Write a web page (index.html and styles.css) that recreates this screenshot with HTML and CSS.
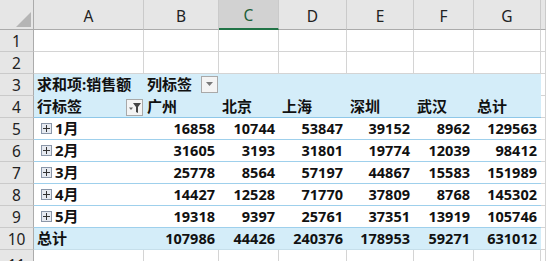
FILE: index.html
```html
<!DOCTYPE html>
<html lang="zh-CN">
<head>
    <meta charset="UTF-8">
    <title>数据透视表</title>
    <link rel="stylesheet" href="styles.css">
</head>
<body>
<div class="sheet">
    <!-- header row -->
    <div class="corner"><span class="tri"></span></div>
    <div class="col-head">A</div>
    <div class="col-head">B</div>
    <div class="col-head active">C</div>
    <div class="col-head">D</div>
    <div class="col-head">E</div>
    <div class="col-head">F</div>
    <div class="col-head">G</div>
    <div class="col-head"></div>

    <!-- row 1 -->
    <div class="row-head">1</div>
    <div class="cell"></div><div class="cell"></div><div class="cell"></div><div class="cell"></div>
    <div class="cell"></div><div class="cell"></div><div class="cell"></div><div class="cell"></div>

    <!-- row 2 -->
    <div class="row-head">2</div>
    <div class="cell"></div><div class="cell"></div><div class="cell"></div><div class="cell"></div>
    <div class="cell"></div><div class="cell"></div><div class="cell"></div><div class="cell"></div>

    <!-- row 3 -->
    <div class="row-head">3</div>
    <div class="pv head">求和项:销售额</div>
    <div class="pv head span2">列标签<span class="drop-btn"><svg width="8" height="5" viewBox="0 0 8 5"><path d="M0 0h7L3.5 4z" fill="#7a7a7a"/></svg></span></div>
    <div class="pv head"></div>
    <div class="pv head"></div>
    <div class="pv head"></div>
    <div class="pv head"></div>
    <div class="cell"></div>

    <!-- row 4 -->
    <div class="row-head">4</div>
    <div class="pv head under split">行标签 <span class="filter-btn"><svg width="14" height="12" viewBox="0 0 14 12"><path d="M1 5.5h4L3 8z" fill="#666"/><path d="M5 1h8L10 5v6L8 10V5z" fill="#444"/></svg></span></div>
    <div class="pv head under">广州</div>
    <div class="pv head under">北京</div>
    <div class="pv head under">上海</div>
    <div class="pv head under">深圳</div>
    <div class="pv head under">武汉</div>
    <div class="pv head under">总计</div>
    <div class="cell"></div>

    <!-- row 5 -->
    <div class="row-head">5</div>
    <div class="pv item"><span class="plus"><svg width="9" height="9" viewBox="0 0 9 9"><path d="M1 4.5h7M4.5 1v7" stroke="#333" stroke-width="1"/></svg></span>1月</div>
    <div class="pv num">16858</div>
    <div class="pv num">10744</div>
    <div class="pv num">53847</div>
    <div class="pv num">39152</div>
    <div class="pv num">8962</div>
    <div class="pv num">129563</div>
    <div class="cell"></div>

    <!-- row 6 -->
    <div class="row-head">6</div>
    <div class="pv item"><span class="plus"><svg width="9" height="9" viewBox="0 0 9 9"><path d="M1 4.5h7M4.5 1v7" stroke="#333" stroke-width="1"/></svg></span>2月</div>
    <div class="pv num">31605</div>
    <div class="pv num">3193</div>
    <div class="pv num">31801</div>
    <div class="pv num">19774</div>
    <div class="pv num">12039</div>
    <div class="pv num">98412</div>
    <div class="cell"></div>

    <!-- row 7 -->
    <div class="row-head">7</div>
    <div class="pv item"><span class="plus"><svg width="9" height="9" viewBox="0 0 9 9"><path d="M1 4.5h7M4.5 1v7" stroke="#333" stroke-width="1"/></svg></span>3月</div>
    <div class="pv num">25778</div>
    <div class="pv num">8564</div>
    <div class="pv num">57197</div>
    <div class="pv num">44867</div>
    <div class="pv num">15583</div>
    <div class="pv num">151989</div>
    <div class="cell"></div>

    <!-- row 8 -->
    <div class="row-head">8</div>
    <div class="pv item"><span class="plus"><svg width="9" height="9" viewBox="0 0 9 9"><path d="M1 4.5h7M4.5 1v7" stroke="#333" stroke-width="1"/></svg></span>4月</div>
    <div class="pv num">14427</div>
    <div class="pv num">12528</div>
    <div class="pv num">71770</div>
    <div class="pv num">37809</div>
    <div class="pv num">8768</div>
    <div class="pv num">145302</div>
    <div class="cell"></div>

    <!-- row 9 -->
    <div class="row-head">9</div>
    <div class="pv item"><span class="plus"><svg width="9" height="9" viewBox="0 0 9 9"><path d="M1 4.5h7M4.5 1v7" stroke="#333" stroke-width="1"/></svg></span>5月</div>
    <div class="pv num">19318</div>
    <div class="pv num">9397</div>
    <div class="pv num">25761</div>
    <div class="pv num">37351</div>
    <div class="pv num">13919</div>
    <div class="pv num">105746</div>
    <div class="cell"></div>

    <!-- row 10 -->
    <div class="row-head">10</div>
    <div class="pv total">总计</div>
    <div class="pv total num">107986</div>
    <div class="pv total num">44426</div>
    <div class="pv total num">240376</div>
    <div class="pv total num">178953</div>
    <div class="pv total num">59271</div>
    <div class="pv total num">631012</div>
    <div class="cell"></div>

    <!-- row 11 -->
    <div class="row-head">11</div>
    <div class="cell"></div><div class="cell"></div><div class="cell"></div><div class="cell"></div>
    <div class="cell"></div><div class="cell"></div><div class="cell"></div><div class="cell"></div>
</div>
</body>
</html>
```

FILE: styles.css
```css
html, body {
    margin: 0;
    background: #fff;
    overflow: hidden;
}
.sheet {
    display: grid;
    grid-template-columns: 34px 110px 75px 60px 68px 67px 60px 67px 1fr;
    grid-template-rows: 30px repeat(10, 22px) 30px;
    font-family: "Noto Sans", "Noto Sans CJK SC", sans-serif;
    color: #111;
}
.corner {
    background: #e6e6e6;
    border-right: 1px solid #ababab;
    border-bottom: 1px solid #ababab;
    position: relative;
}
.tri {
    position: absolute;
    right: 2px;
    bottom: 2px;
    width: 0;
    height: 0;
    border-left: 15px solid transparent;
    border-bottom: 15px solid #b5b5b5;
}
.col-head {
    background: #e6e6e6;
    border-right: 1px solid #cacaca;
    border-bottom: 1px solid #ababab;
    display: flex;
    align-items: center;
    justify-content: center;
    font-size: 15.5px;
    color: #222;
    padding-top: 2px;
}
.col-head.active {
    background: #d2d2d2;
    border-bottom: 2px solid #217346;
    color: #1d5f3a;
}
.row-head {
    background: #e6e6e6;
    border-right: 1px solid #ababab;
    border-bottom: 1px solid #cacaca;
    display: flex;
    align-items: center;
    justify-content: center;
    font-size: 15.5px;
    color: #222;
}
.cell {
    border-right: 1px solid #d4d4d4;
    border-bottom: 1px solid #d4d4d4;
}
.pv {
    display: flex;
    align-items: flex-end;
    font-weight: bold;
    font-size: 15px;
    line-height: 20px;
    padding: 0 4px 1px 3px;
    white-space: nowrap;
    border-bottom: 1px solid #9fd0ec;
}
.pv.head {
    background: #d4edf9;
    border-bottom-color: #d4edf9;
}
.pv.head.under {
    border-bottom-color: #8ec7e8;
}
.span2 {
    grid-column: span 2;
}
.split {
    justify-content: space-between;
}
.num {
    justify-content: flex-end;
    font-size: 14.5px;
}
.pv.total {
    background: #d4edf9;
    border-bottom-color: #c6dfeb;
}
.drop-btn, .filter-btn {
    display: inline-flex;
    align-items: center;
    justify-content: center;
    width: 15px;
    height: 15px;
    border: 1px solid #a9a9a9;
    background: #f4f4f4;
    align-self: center;
}
.drop-btn {
    margin-left: 9px;
    margin-top: 0;
}
.filter-btn {
    margin-right: -3px;
    margin-top: 3px;
}
.item {
    padding-left: 7px;
}
.plus {
    display: inline-flex;
    width: 9px;
    height: 9px;
    border: 1px solid #8a96a8;
    background: #e6eaf1;
    margin: 0 3px 4px 0;
    align-self: flex-end;
}
```
